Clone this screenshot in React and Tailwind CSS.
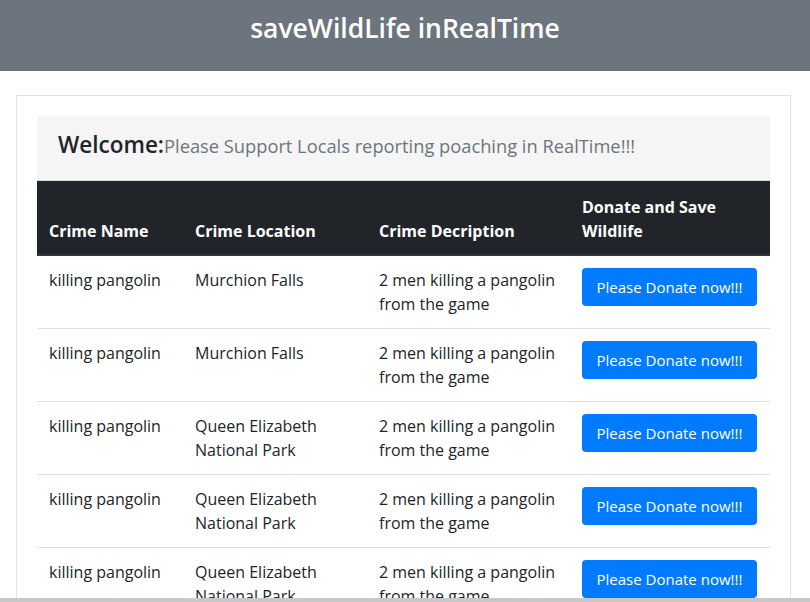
const crimes = [
  { name: 'killing pangolin', location: 'Murchion Falls', description: '2 men killing a pangolin from the game' },
  { name: 'killing pangolin', location: 'Murchion Falls', description: '2 men killing a pangolin from the game' },
  { name: 'killing pangolin', location: 'Queen Elizabeth National Park', description: '2 men killing a pangolin from the game' },
  { name: 'killing pangolin', location: 'Queen Elizabeth National Park', description: '2 men killing a pangolin from the game' },
  { name: 'killing pangolin', location: 'Queen Elizabeth National Park', description: '2 men killing a pangolin from the game' },
];

function CrimeRow({ crime }) {
  return (
    <tr className="border-t border-[#dee2e6] align-top">
      <td className="p-3">{crime.name}</td>
      <td className="p-3">{crime.location}</td>
      <td className="p-3">{crime.description}</td>
      <td className="p-3">
        <button className="bg-[#007bff] text-white rounded w-[175px] h-[38px] text-[15px] leading-6 whitespace-nowrap">
          Please Donate now!!!
        </button>
      </td>
    </tr>
  );
}

export default function App() {
  return (
    <div className="h-[602px] overflow-hidden bg-white text-[#212529] font-['Open_Sans',sans-serif] text-base leading-6">
      <header className="bg-[#6c757d] h-[71px] flex justify-center pt-[10px]">
        <h1 className="text-white text-[26.5px] font-semibold leading-9">saveWildLife inRealTime</h1>
      </header>

      <div className="ml-4 mt-6 w-[775px] border border-[#dee2e6] px-5 pt-5">
        <div className="bg-[#f5f5f5] rounded-t h-[65px] flex items-baseline pl-[21px] pt-[17px] border-b border-[#d6d6d6]">
          <span className="text-[22.5px] font-semibold">Welcome:</span>
          <span className="text-[18.3px] text-[#6c757d]">Please Support Locals reporting poaching in RealTime!!!</span>
        </div>

        <table className="w-full border-collapse text-left table-fixed">
          <colgroup>
            <col className="w-[146px]" />
            <col className="w-[184px]" />
            <col className="w-[203px]" />
            <col />
          </colgroup>
          <thead className="bg-[#212529] text-white">
            <tr>
              <th className="px-3 pt-[14px] pb-[11px] align-bottom font-bold border-b-2 border-[#32383e]">Crime Name</th>
              <th className="px-3 pt-[14px] pb-[11px] align-bottom font-bold border-b-2 border-[#32383e]">Crime Location</th>
              <th className="px-3 pt-[14px] pb-[11px] align-bottom font-bold border-b-2 border-[#32383e]">Crime Decription</th>
              <th className="px-3 pt-[14px] pb-[11px] align-bottom font-bold border-b-2 border-[#32383e]">Donate and Save Wildlife</th>
            </tr>
          </thead>
          <tbody>
            {crimes.map((crime, i) => (
              <CrimeRow key={i} crime={crime} />
            ))}
          </tbody>
        </table>
      </div>

      <div className="fixed bottom-0 left-0 right-0 h-[4px] bg-[#c8c8c8]" />
    </div>
  );
}
